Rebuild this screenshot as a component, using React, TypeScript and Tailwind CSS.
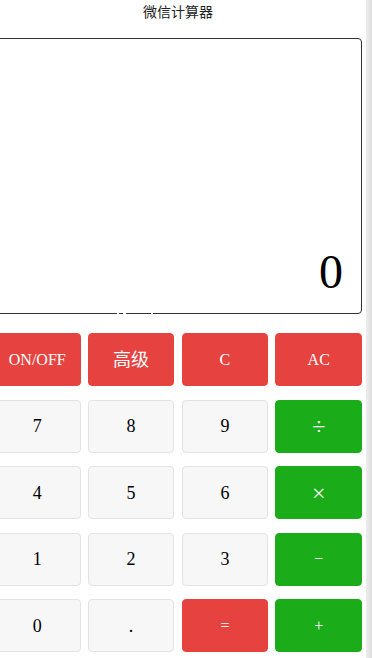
import React from 'react'

type Key = { label: string; kind: 'red' | 'green' | 'gray' }

const keys: Key[] = [
  { label: 'ON/OFF', kind: 'red' },
  { label: '高级', kind: 'red' },
  { label: 'C', kind: 'red' },
  { label: 'AC', kind: 'red' },
  { label: '7', kind: 'gray' },
  { label: '8', kind: 'gray' },
  { label: '9', kind: 'gray' },
  { label: '÷', kind: 'green' },
  { label: '4', kind: 'gray' },
  { label: '5', kind: 'gray' },
  { label: '6', kind: 'gray' },
  { label: '×', kind: 'green' },
  { label: '1', kind: 'gray' },
  { label: '2', kind: 'gray' },
  { label: '3', kind: 'gray' },
  { label: '−', kind: 'green' },
  { label: '0', kind: 'gray' },
  { label: '.', kind: 'gray' },
  { label: '=', kind: 'red' },
  { label: '+', kind: 'green' },
]

const kindClass = {
  red: 'bg-[#e64340] text-white border-[#e64340]',
  green: 'bg-[#1aad19] text-white border-[#1aad19]',
  gray: 'bg-[#f7f7f7] text-black border-[#e3e3e3]',
}

function labelSize(k: Key) {
  if (k.label === '高级') return 'text-[18px]'
  if (k.label === '÷' || k.label === '×') return 'text-[24px]'
  if (k.kind === 'gray') return 'text-[18px]'
  return ''
}

export default function App() {
  return (
    <div className="flex w-[372px] h-[658px] bg-white overflow-hidden">
      <div className="w-[366px] h-full overflow-hidden">
        <div className="ml-[-6px] w-[368px]">
          <div className="h-[38px] pt-[1px] text-center text-[14px] leading-[20px] text-[#222] font-['Noto_Sans_CJK_SC',sans-serif]">
            微信计算器
          </div>

          <div className="relative h-[276px] border border-[#333] rounded-[4px] flex items-end justify-end pr-[18px] pb-[17px]">
            <span className="text-[48px] leading-none text-black font-['Liberation_Serif',serif]">0</span>
            <span className="absolute bottom-[-1px] left-[122px] w-[2px] h-[1px] bg-white" />
            <span className="absolute bottom-[-1px] left-[128px] w-[3px] h-[1px] bg-white" />
            <span className="absolute bottom-[-1px] left-[156px] w-[2px] h-[1px] bg-white" />
          </div>

          <div className="mt-[19px] grid grid-cols-4 gap-x-[7.3px] gap-y-[13.5px]">
            {keys.map((k) => (
              <button
                key={k.label}
                className={`h-[53px] rounded-[4px] border flex items-center justify-center text-[16px] font-['Liberation_Serif','Noto_Sans_CJK_SC',serif] ${kindClass[k.kind]}`}
              >
                <span className={`leading-none ${labelSize(k)}`}>{k.label}</span>
              </button>
            ))}
          </div>
        </div>
      </div>
      <div className="w-[6px] h-full bg-gradient-to-r from-[#ededed] to-[#dedede]" />
    </div>
  )
}
